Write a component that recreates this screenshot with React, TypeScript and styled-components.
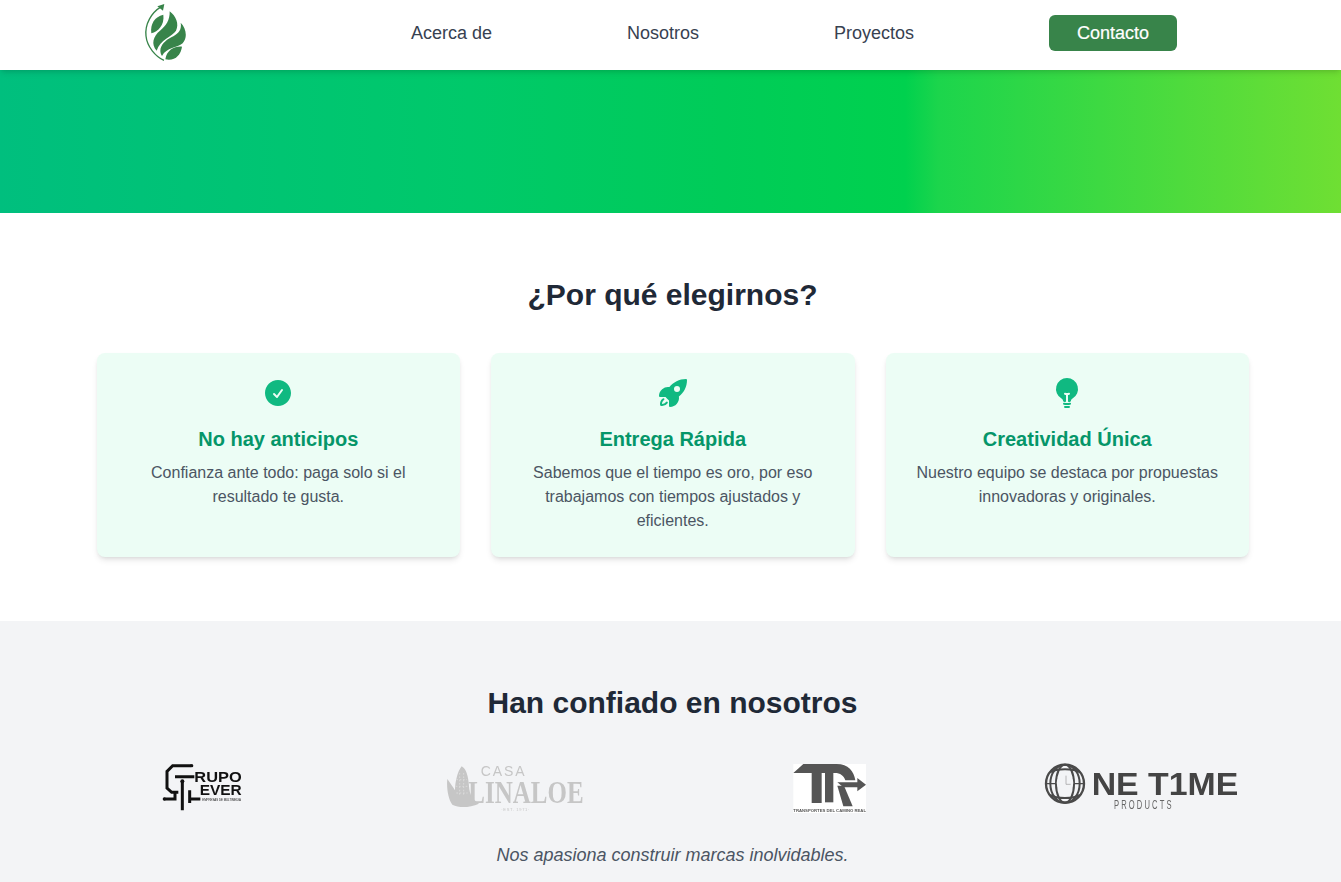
import React from 'react';
import styled, { createGlobalStyle } from 'styled-components';
import { HiCheckCircle, HiRocketLaunch, HiLightBulb } from 'react-icons/hi2';

const GlobalStyle = createGlobalStyle`
    html, body {
        margin: 0;
        padding: 0;
        background: #fff;
        font-family: "Liberation Sans", Arial, sans-serif;
    }
`;

const Header = styled.header`
    position: relative;
    z-index: 2;
    height: 70px;
    display: flex;
    align-items: center;
    justify-content: space-between;
    padding: 0 164px 0 144px;
    background: #fff;
    box-shadow: 0 4px 6px -1px rgba(0, 0, 0, 0.1), 0 2px 4px -2px rgba(0, 0, 0, 0.1);
`;

const LogoSvg = styled.svg`
    width: 43px;
    height: 70px;
    display: block;
    filter: blur(0.3px);
`;

const Menu = styled.nav`
    display: flex;
    align-items: center;
    gap: 135px;
    padding-bottom: 4px;
`;

const MenuLink = styled.a`
    font-size: 18px;
    line-height: 28px;
    color: #374151;
`;

const ContactButton = styled.a`
    width: 128px;
    height: 36px;
    display: flex;
    align-items: center;
    justify-content: center;
    border-radius: 6px;
    background: #38844a;
    color: #fff;
    font-size: 18px;
    -webkit-text-stroke: 0.2px #fff;
`;

const Hero = styled.div`
    height: 143px;
    background: linear-gradient(90deg, #00bf7e 0%, #00c96a 35%, #00cc58 54%, #00d14e 67.5%, #1cd54c 70%, #6fdf33 100%);
`;

const Section = styled.section<{ $muted?: boolean }>`
    padding: 64px 0 ${(p) => (p.$muted ? '16px' : '64px')};
    background: ${(p) => (p.$muted ? '#f3f4f6' : '#fff')};
`;

const Heading = styled.h2`
    margin: 0;
    padding-left: 4px;
    font-size: 30px;
    line-height: 36px;
    font-weight: 700;
    text-align: center;
    color: #1f2937;
`;

const Cards = styled.div`
    display: grid;
    grid-template-columns: repeat(3, 1fr);
    gap: 31px;
    margin: 40px 92px 0 96.5px;
`;

const Card = styled.article`
    height: 204px;
    box-sizing: border-box;
    padding: 24px;
    border-radius: 8px;
    background: #ecfdf5;
    box-shadow: 0 4px 6px -1px rgba(0, 0, 0, 0.1), 0 2px 4px -2px rgba(0, 0, 0, 0.1);
    text-align: center;
`;

const CardIcon = styled.div`
    height: 32px;
    margin-bottom: 16px;
    color: #10b981;
    font-size: 32px;
    line-height: 0;
`;

const CardTitle = styled.h3`
    margin: 0 0 8px;
    font-size: 20px;
    line-height: 28px;
    font-weight: 700;
    color: #059669;
`;

const CardText = styled.p`
    margin: 0;
    font-size: 16px;
    line-height: 24px;
    color: #4b5563;
`;

const Logos = styled.div`
    display: grid;
    grid-template-columns: repeat(4, 313px);
    justify-content: center;
    margin-top: 32px;
    height: 65px;
`;

const LogoCell = styled.div`
    display: flex;
    justify-content: center;
    align-items: flex-start;
`;

const ClientLogo = styled.svg`
    display: block;
    height: 65px;
    overflow: visible;
    filter: blur(0.35px);
`;

const Tagline = styled.p`
    margin: 23px 0 0;
    padding-left: 4px;
    font-size: 18px;
    line-height: 28px;
    font-style: italic;
    text-align: center;
    color: #4b5563;
`;

const links = ['Acerca de', 'Nosotros', 'Proyectos'];

const reasons = [
    {
        icon: <HiCheckCircle />,
        title: 'No hay anticipos',
        text: 'Confianza ante todo: paga solo si el resultado te gusta.',
    },
    {
        icon: <HiRocketLaunch />,
        title: 'Entrega Rápida',
        text: 'Sabemos que el tiempo es oro, por eso trabajamos con tiempos ajustados y eficientes.',
    },
    {
        icon: <HiLightBulb />,
        title: 'Creatividad Única',
        text: 'Nuestro equipo se destaca por propuestas innovadoras y originales.',
    },
];

const BrandLogo = () => (
    <LogoSvg viewBox="70 0 129 210">
        <g fill="#38844a">
            <path d="M122 20 C 92 38, 72 72, 76 108 C 79 140, 105 170, 130 181" fill="none" stroke="#38844a" strokeWidth="4" />
            <path d="M110 19 L131 12 L127 32 Z" />
            <path d="M128 44 C 102 50, 88 72, 92 100 C 112 94, 132 76, 128 44 Z" />
            <path d="M147 34 C 166 48, 176 72, 166 92 C 155 110, 118 118, 108 152 C 90 132, 98 108, 118 92 C 136 78, 148 60, 147 34 Z" />
            <path d="M180 68 C 196 84, 202 112, 186 130 C 170 144, 138 142, 124 168 C 110 146, 128 124, 152 112 C 172 102, 184 92, 180 68 Z" />
            <path d="M184 140 C 162 138, 138 150, 134 178 C 162 184, 180 166, 184 140 Z" />
        </g>
    </LogoSvg>
);

const GrupoEver = () => (
    <ClientLogo viewBox="0 0 360 195" width="120">
        <g fill="none" stroke="#111" strokeWidth="9">
            <path d="M150 38 H95 L78 55 V105 L92 118 H112" />
            <path d="M102 71 H160 M124 85 V172 M146 112 V150 M70 138 H102 V116 M178 138 H146" />
        </g>
        <g fill="#111">
            <circle cx="152" cy="38" r="5" />
            <circle cx="70" cy="138" r="5" />
            <circle cx="124" cy="85" r="6" />
            <text x="160" y="87" fontFamily="'Liberation Sans'" fontWeight="700" fontSize="46" textLength="142" lengthAdjust="spacingAndGlyphs">RUPO</text>
            <text x="176" y="127" fontFamily="'Liberation Sans'" fontWeight="700" fontSize="46" textLength="126" lengthAdjust="spacingAndGlyphs">EVER</text>
            <text x="184" y="144" fontFamily="'Liberation Sans'" fontSize="10" textLength="116" lengthAdjust="spacingAndGlyphs">EMPRESAS DE MULTIMEDIA</text>
        </g>
    </ClientLogo>
);

const CasaLinaloe = () => (
    <ClientLogo viewBox="0 0 510 195" width="170">
        <g fill="#c6c6c6">
            <path d="M98 40 C 112 48, 118 70, 120 100 C 122 125, 130 140, 150 152 C 120 165, 90 165, 70 155 C 58 140, 52 105, 55 78 C 65 92, 72 102, 78 112 C 78 90, 85 55, 98 40 Z" />
            <text x="155" y="70" fontFamily="'Liberation Sans'" fontSize="42" textLength="132" lengthAdjust="spacing">CASA</text>
            <text x="118" y="150" fontFamily="'Liberation Serif'" fontWeight="700" fontSize="96" textLength="346" lengthAdjust="spacingAndGlyphs">LINALOE</text>
            <text x="217" y="175" fontFamily="'Liberation Sans'" fontSize="12" textLength="84">·EST. 1971·</text>
        </g>
        <path d="M92 60 V130 M104 60 V130 M82 80 H114 M80 100 H116 M82 120 H116" fill="none" stroke="#dcdcdc" strokeWidth="2.5" strokeDasharray="5 5" />
    </ClientLogo>
);

const TransportesLogo = () => (
    <ClientLogo viewBox="-9 0 300 195" width="100">
        <rect x="40" y="33" width="218" height="147" fill="#fff" />
        <g fill="#555">
            <path d="M40 60 L70 33 H170 C 205 33 222 55 226 82 H196 C 192 68 180 60 165 60 Z" />
            <path d="M95 60 H125 V150 H95 Z" />
            <path d="M135 60 H160 V148 H135 Z" />
            <path d="M172 88 H232 V75 L258 95 L232 115 V103 H190 Z" />
            <path d="M172 98 H192 L218 160 H190 Z" />
            <text x="40" y="177" fontFamily="'Liberation Sans'" fontSize="13" fontWeight="700" textLength="218" lengthAdjust="spacingAndGlyphs">TRANSPORTES DEL CAMINO REAL</text>
        </g>
    </ClientLogo>
);

const OneTime = () => (
    <ClientLogo viewBox="0 0 660 195" width="220">
        <g fill="none" stroke="#4a4a4a">
            <circle cx="105" cy="92" r="57" strokeWidth="7" />
            <ellipse cx="105" cy="92" rx="44" ry="57" strokeWidth="6" />
            <ellipse cx="105" cy="92" rx="27" ry="57" strokeWidth="6" />
            <path d="M60 58 C 82 46, 128 46, 150 58 M60 126 C 82 138, 128 138, 150 126" strokeWidth="6" />
            <path d="M48 92 H162" strokeWidth="4" />
        </g>
        <circle cx="105" cy="90" r="25" fill="#f3f4f6" />
        <path d="M108 68 V94 H122" fill="none" stroke="#999" strokeWidth="2" />
        <text x="185" y="125" fontFamily="'Liberation Sans'" fontWeight="700" fontSize="92" fill="#444" textLength="440" lengthAdjust="spacingAndGlyphs">NE T1ME</text>
        <text transform="translate(252 167) scale(0.6 1)" fontFamily="'Liberation Sans'" fontSize="38" fill="#666" textLength="288" lengthAdjust="spacing">PRODUCTS</text>
    </ClientLogo>
);

const App: React.FC = () => {
    return (
        <>
            <GlobalStyle />
            <Header>
                <BrandLogo />
                <Menu>
                    {links.map((link) => (
                        <MenuLink key={link}>{link}</MenuLink>
                    ))}
                    <ContactButton>Contacto</ContactButton>
                </Menu>
            </Header>
            <Hero />
            <Section>
                <Heading>¿Por qué elegirnos?</Heading>
                <Cards>
                    {reasons.map((reason) => (
                        <Card key={reason.title}>
                            <CardIcon>{reason.icon}</CardIcon>
                            <CardTitle>{reason.title}</CardTitle>
                            <CardText>{reason.text}</CardText>
                        </Card>
                    ))}
                </Cards>
            </Section>
            <Section $muted>
                <Heading>Han confiado en nosotros</Heading>
                <Logos>
                    <LogoCell><GrupoEver /></LogoCell>
                    <LogoCell><CasaLinaloe /></LogoCell>
                    <LogoCell><TransportesLogo /></LogoCell>
                    <LogoCell><OneTime /></LogoCell>
                </Logos>
                <Tagline>Nos apasiona construir marcas inolvidables.</Tagline>
            </Section>
        </>
    );
};

export default App;
